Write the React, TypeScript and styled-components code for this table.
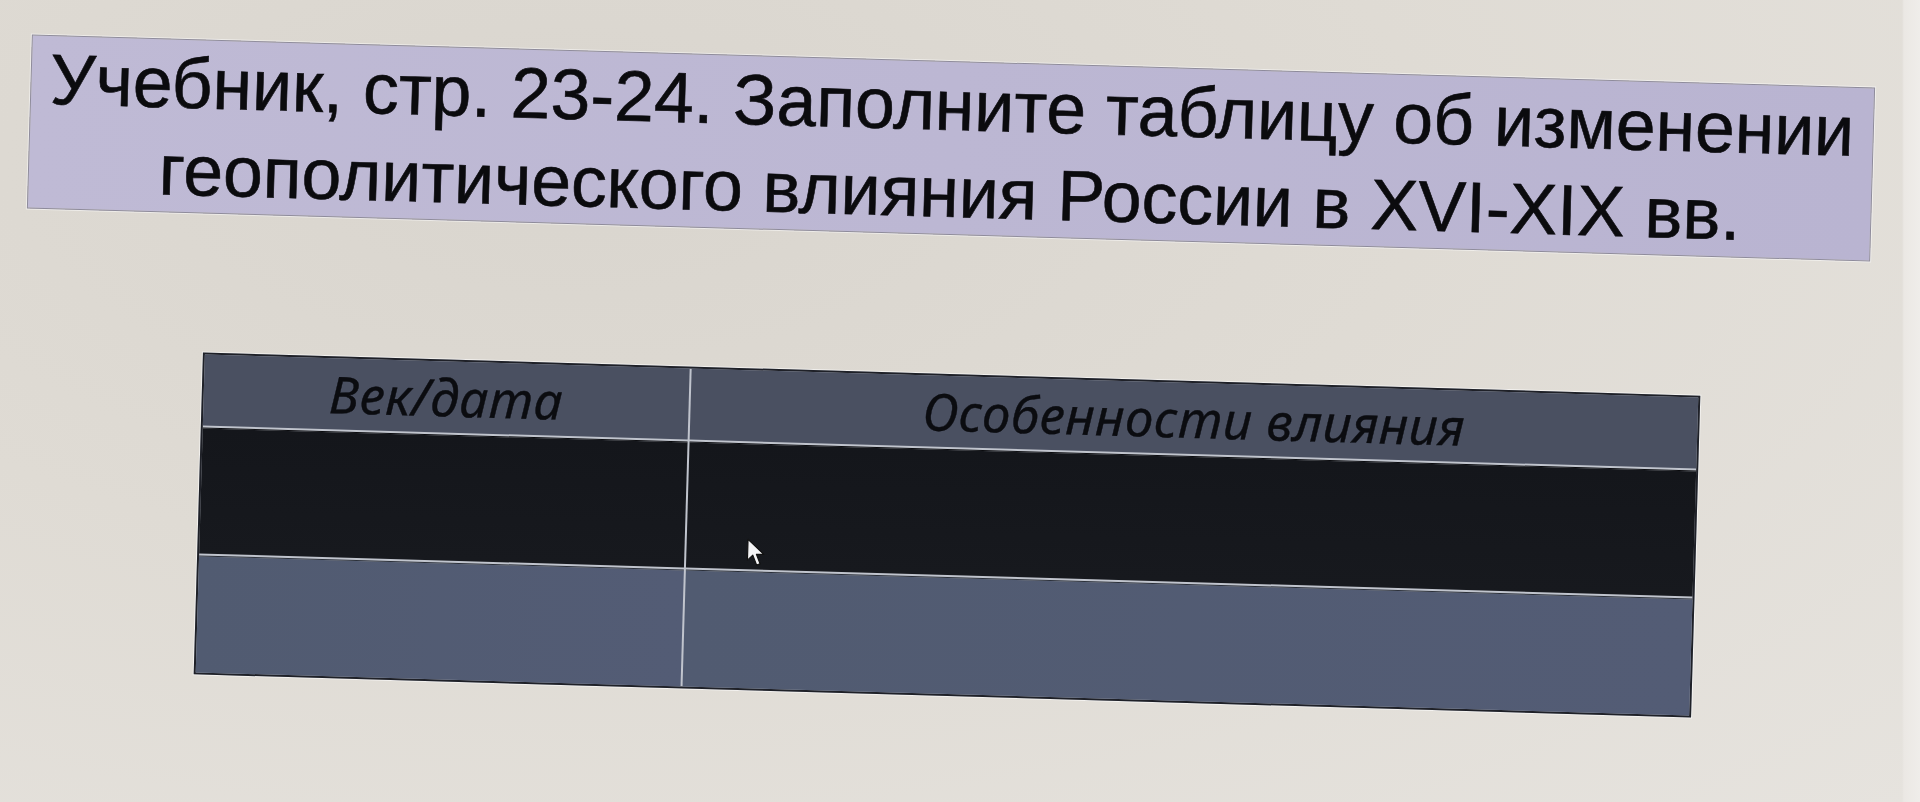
import React from "react";
import styled, { createGlobalStyle } from "styled-components";

const Global = createGlobalStyle`
  html, body { margin: 0; padding: 0; }
  body { width: 1920px; height: 802px; overflow: hidden; font-family: "Liberation Sans", Arial, sans-serif; }
`;

const Page = styled.div`
  width: 1920px;
  height: 802px;
  overflow: hidden;
  background:
    linear-gradient(to right, rgba(255,255,255,0) 0, rgba(255,255,255,0) 1902px, #ebe8e4 1904px, #efedea 1920px),
    radial-gradient(ellipse at 30% 20%, #d9d5ce 0%, #dfdbd4 45%, #e6e3de 100%);
  display: flex;
  flex-direction: column;
  align-items: flex-start;
  padding-top: 61px;
  box-sizing: border-box;
`;

const TitleBox = styled.div`
  margin-left: 29px;
  width: 1844px;
  height: 174px;
  box-sizing: border-box;
  background: linear-gradient(to right, #bfbad5 0%, #bcb7d3 50%, #b9b4d1 100%);
  border: 1px solid #8e8b9c;
  box-shadow: 0 0 0 1px rgba(255,255,255,0.5);
  transform: rotate(1.65deg);
  display: flex;
  align-items: flex-start;
  justify-content: center;
`;

const TitleText = styled.h1`
  margin: 0;
  font-family: "Liberation Sans", Arial, sans-serif;
  font-weight: 400;
  font-size: 71.5px;
  line-height: 87px;
  color: #0b0b0e;
  -webkit-text-stroke: 0.6px #0b0b0e;
  text-align: center;
  white-space: nowrap;
`;

const Table = styled.div`
  position: relative;
  margin-top: 139px;
  margin-left: 198px;
  width: 1498px;
  height: 322px;
  box-sizing: border-box;
  display: grid;
  grid-template-columns: 485px 1fr;
  grid-template-rows: 71px 126px 1fr;
  background: #c0c4cd;
  gap: 2px;
  border: 2px solid #1f2128;
  box-shadow: 0 0 0 1px rgba(255,255,255,0.6);
  transform: rotate(1.65deg);
`;

const HeaderCell = styled.div`
  background: #4a5061;
  display: flex;
  justify-content: center;
  padding-top: 12px;
  box-sizing: border-box;
  font-family: "Noto Sans", "Open Sans", sans-serif;
  font-style: italic;
  font-size: 51px;
  letter-spacing: 0.6px;
  line-height: 47px;
  color: #0b0c10;
  -webkit-text-stroke: 0.4px #0b0c10;
  white-space: nowrap;
`;

const BodyCell = styled.div<{ $tone: "dark" | "slate" }>`
  background: ${(p) =>
    p.$tone === "dark"
      ? "linear-gradient(to bottom, #14161b, #17191e)"
      : "linear-gradient(to right, #515b71, #535c75)"};
  border-top: 1px solid ${(p) => (p.$tone === "dark" ? "#0a0b0e" : "#2b303a")};
`;

const Cursor = styled.svg`
  position: absolute;
  left: 547px;
  top: 168px;
  width: 21px;
  height: 30px;
  pointer-events: none;
`;

export default function App() {
  return (
    <>
      <Global />
      <Page>
        <TitleBox>
          <TitleText>
            Учебник, стр. 23-24. Заполните таблицу об изменении
            <br />
            геополитического влияния России в XVI-XIX вв.
          </TitleText>
        </TitleBox>
        <Table>
          <HeaderCell>Век/дата</HeaderCell>
          <HeaderCell>Особенности влияния</HeaderCell>
          <BodyCell $tone="dark" />
          <BodyCell $tone="dark" />
          <BodyCell $tone="slate" />
          <BodyCell $tone="slate" />
          <Cursor viewBox="0 0 18 26">
            <path
              d="M1 1 L1 19 L5.5 14.5 L9 23 L12 21.8 L8.6 13.6 L15 13.6 Z"
              fill="#f4f4f6"
              stroke="#111"
              strokeWidth="1"
              strokeLinejoin="round"
            />
          </Cursor>
        </Table>
      </Page>
    </>
  );
}
